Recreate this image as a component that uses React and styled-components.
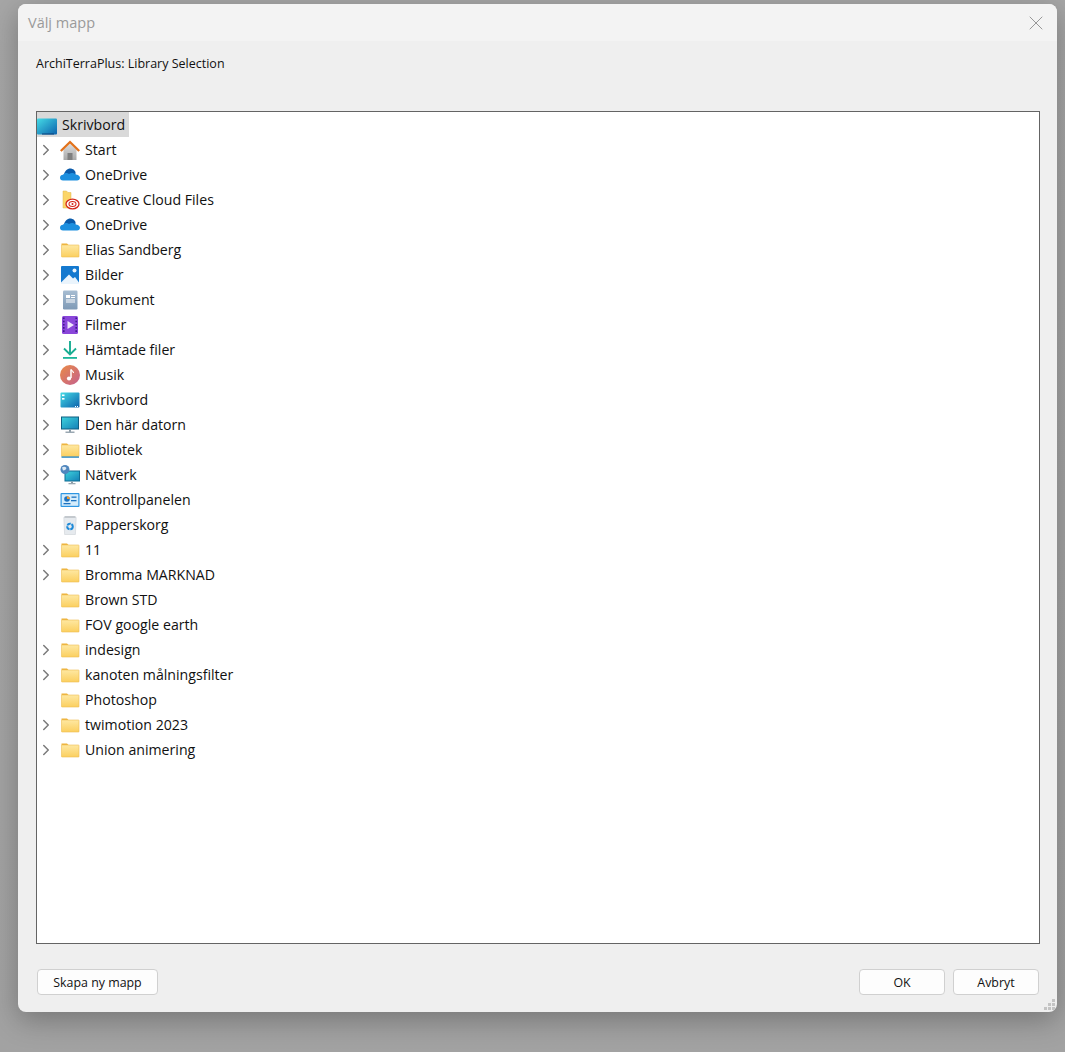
import React from 'react';
import styled, { createGlobalStyle } from 'styled-components';
import { ChevronRight, X } from 'lucide-react';

const GlobalStyle = createGlobalStyle`
  html, body {
    margin: 0;
    padding: 0;
    height: 1052px;
    overflow: hidden;
    background: linear-gradient(180deg, #a6a6a6 0%, #a2a2a2 100%);
    font-family: "Open Sans", "Noto Sans", "Liberation Sans", sans-serif;
  }
`;

const Gradients = () => (
  <svg width="0" height="0" style={{ position: 'absolute' }}>
    <defs>
      <linearGradient id="dk" x1="0" y1="0" x2="1" y2="1">
        <stop offset="0" stopColor="#45dbe6" />
        <stop offset="1" stopColor="#0b62ad" />
      </linearGradient>
      <linearGradient id="fold" x1="0" y1="0" x2="0" y2="1">
        <stop offset="0" stopColor="#fee8a2" />
        <stop offset="1" stopColor="#fbcf5f" />
      </linearGradient>
      <linearGradient id="mu" x1="0" y1="0" x2="1" y2="1">
        <stop offset="0" stopColor="#ea8b45" />
        <stop offset="1" stopColor="#c4608f" />
      </linearGradient>
      <linearGradient id="home" x1="0" y1="0" x2="0" y2="1">
        <stop offset="0" stopColor="#dcdcdc" />
        <stop offset="1" stopColor="#a8a8a8" />
      </linearGradient>
      <linearGradient id="pc" x1="0" y1="0" x2="1" y2="1">
        <stop offset="0" stopColor="#3cd0dc" />
        <stop offset="1" stopColor="#1583b8" />
      </linearGradient>
      <linearGradient id="doc" x1="0" y1="0" x2="0" y2="1">
        <stop offset="0" stopColor="#a7bdd2" />
        <stop offset="1" stopColor="#7f9ab6" />
      </linearGradient>
    </defs>
  </svg>
);

const Folder = ({ bar }) => (
  <svg width="20" height="20" viewBox="0 0 20 20">
    <path d="M1.500 3.500h5.500l2 2h-7.500z" fill="#eeb23a" />
    <rect x="1.500" y="5" width="17.500" height={bar ? 11.500 : 12} rx="0.500" fill="url(#fold)" stroke="#eebd52" strokeWidth="0.600" />
    {bar && <rect x="1.500" y="16.400" width="17.500" height="1.400" fill="#2f8cc4" />}
  </svg>
);

const icons = {
  root: (
    <svg width="20" height="20" viewBox="0 0 20 20">
      <rect x="0" y="3.500" width="20" height="16" rx="1" fill="url(#dk)" />
      <rect x="5" y="18.500" width="12" height="1" fill="#0a3f78" />
    </svg>
  ),
  desk: (
    <svg width="20" height="20" viewBox="0 0 20 20">
      <rect x="0.500" y="2.500" width="19" height="15" rx="1" fill="url(#dk)" />
      <rect x="2" y="4.500" width="2.500" height="1.600" fill="#fff" />
      <rect x="2" y="8" width="2.500" height="1.600" fill="#fff" />
      <rect x="15" y="16" width="1" height="1" fill="#fff" />
      <rect x="17" y="16" width="1" height="1" fill="#fff" />
    </svg>
  ),
  home: (
    <svg width="20" height="20" viewBox="0 0 20 20">
      <path d="M3.500 9.500 10 3.500l6.500 6V20h-13z" fill="url(#home)" />
      <rect x="7.500" y="13" width="5" height="7" fill="#7f7f7f" />
      <path d="M0.800 11 10 2l9.200 9" fill="none" stroke="#e2711a" strokeWidth="2.300" />
    </svg>
  ),
  cloud: (
    <svg width="20" height="20" viewBox="0 0 20 20">
      <path d="M4 10C4.500 5.500 8 3 11 3.500 13 3.800 14.500 5 15.500 7V10.500H4z" fill="#0a5bab" />
      <path d="M3 15.500C1 15.500 0 14 0 12.700 0 11 1.300 9.800 3 9.800 4.500 8 7 7.500 9 9 11 7.500 14 7.500 15.500 9.500 18 9.500 20 10.800 20 12.700 20 14.300 18.700 15.500 17 15.500z" fill="#1c8fdf" />
    </svg>
  ),
  cc: (
    <svg width="20" height="20" viewBox="0 0 20 20">
      <path d="M3 1h3.500l1.500 1.500h3V18H3z" fill="#fbd568" stroke="#dfb650" strokeWidth="0.500" />
      <ellipse cx="12.500" cy="14" rx="6.500" ry="4.800" fill="#fff" stroke="#d4281c" strokeWidth="1.300" />
      <ellipse cx="12.500" cy="14" rx="3.500" ry="2.500" fill="none" stroke="#d4281c" strokeWidth="1.100" />
      <circle cx="12.500" cy="14" r="1" fill="#d4281c" />
    </svg>
  ),
  pic: (
    <svg width="20" height="20" viewBox="0 0 20 20">
      <rect x="1" y="1" width="18" height="18" rx="1" fill="#1479cf" />
      <path d="M1 17.500 9 9.500l4 4 2-1.500 4 5.500V19H1z" fill="#eaf4fc" />
      <circle cx="14.500" cy="5.500" r="2" fill="#eaf4fc" />
    </svg>
  ),
  doc: (
    <svg width="20" height="20" viewBox="0 0 20 20">
      <rect x="3" y="0.500" width="14.500" height="19" rx="1.200" fill="url(#doc)" />
      <rect x="6" y="5" width="4" height="3" fill="#fff" />
      <rect x="11" y="5" width="4" height="1" fill="#fff" />
      <rect x="11" y="7" width="4" height="1" fill="#fff" />
      <rect x="6" y="9.500" width="9" height="1" fill="#fff" />
      <rect x="6" y="11.500" width="9" height="1" fill="#fff" />
    </svg>
  ),
  film: (
    <svg width="20" height="20" viewBox="0 0 20 20">
      <rect x="2" y="1" width="16" height="18" rx="1.500" fill="#8a46da" />
      <path d="M7.500 6v8l6.500-4z" fill="#efe6fb" />
      <path d="M3.800 2.500v15M16.200 2.500v15" stroke="#3b1888" strokeWidth="1.500" strokeDasharray="1.600 1.600" />
    </svg>
  ),
  down: (
    <svg width="20" height="20" viewBox="0 0 20 20">
      <path d="M10 1v13M4 8.500l6 6 6-6" fill="none" stroke="#19ad92" strokeWidth="1.900" />
      <rect x="3" y="17" width="14" height="1.800" fill="#1bb59a" />
    </svg>
  ),
  music: (
    <svg width="20" height="20" viewBox="0 0 20 20">
      <circle cx="10" cy="10" r="10" fill="url(#mu)" />
      <path d="M11 4.500v8.500" stroke="#fff" strokeWidth="1.500" />
      <path d="M11 4.500c.5 1.500 2.500 1.500 2.500 3.500" stroke="#fff" strokeWidth="1.200" fill="none" />
      <circle cx="9" cy="13.500" r="2.100" fill="#fff" />
    </svg>
  ),
  pc: (
    <svg width="20" height="20" viewBox="0 0 20 20">
      <rect x="1" y="1.500" width="18" height="13" fill="#0f5f82" />
      <rect x="2" y="2.500" width="16" height="11" fill="url(#pc)" />
      <rect x="9" y="14.500" width="2" height="2.500" fill="#8a9ba6" />
      <rect x="5.500" y="16.500" width="9" height="1.500" fill="#9aa8b2" />
    </svg>
  ),
  net: (
    <svg width="20" height="20" viewBox="0 0 20 20">
      <rect x="4.500" y="5.500" width="15.500" height="11" fill="#0f6d94" />
      <rect x="5.500" y="6.500" width="13.500" height="9" fill="url(#pc)" />
      <rect x="11" y="16.500" width="2" height="2" fill="#8a9ba6" />
      <rect x="8.500" y="18" width="7" height="1.300" fill="#9aa8b2" />
      <circle cx="5" cy="4.500" r="4.500" fill="#4f86bd" />
      <path d="M2 2.500c1.500-1 3.500-.8 4.500.5l-1.200 2-2.300.5z" fill="#dce9f4" />
    </svg>
  ),
  panel: (
    <svg width="20" height="20" viewBox="0 0 20 20">
      <rect x="0.500" y="3" width="19" height="14" rx="1" fill="#2d96e2" />
      <rect x="1.700" y="4.200" width="16.600" height="11.600" fill="#d4ecfb" />
      <circle cx="7" cy="9" r="2.800" fill="#1d72c0" />
      <path d="M7 9V6.200A2.800 2.800 0 0 1 9.800 9z" fill="#f09a30" />
      <rect x="11.500" y="6.500" width="5" height="1.300" fill="#1d72c0" />
      <rect x="11" y="10" width="5.500" height="1.300" fill="#1d72c0" />
      <rect x="3.500" y="13" width="7" height="1.300" fill="#1d72c0" />
    </svg>
  ),
  bin: (
    <svg width="20" height="20" viewBox="0 0 20 20">
      <path d="M3.800 2.500h12.400l-.8 17h-10.800z" fill="#e6eaee" stroke="#ccd1d6" strokeWidth="0.600" />
      <rect x="4.500" y="1" width="11" height="2" fill="#c4c9ce" />
      <circle cx="10" cy="11.500" r="2.800" fill="none" stroke="#1e8ad8" strokeWidth="2" strokeDasharray="4 0.800" />
    </svg>
  ),
  folder: <Folder />,
  lib: <Folder bar />,
};

const rows = [
  ['Start', 'home', true],
  ['OneDrive', 'cloud', true],
  ['Creative Cloud Files', 'cc', true],
  ['OneDrive', 'cloud', true],
  ['Elias Sandberg', 'folder', true],
  ['Bilder', 'pic', true],
  ['Dokument', 'doc', true],
  ['Filmer', 'film', true],
  ['Hämtade filer', 'down', true],
  ['Musik', 'music', true],
  ['Skrivbord', 'desk', true],
  ['Den här datorn', 'pc', true],
  ['Bibliotek', 'lib', true],
  ['Nätverk', 'net', true],
  ['Kontrollpanelen', 'panel', true],
  ['Papperskorg', 'bin', false],
  ['11', 'folder', true],
  ['Bromma MARKNAD', 'folder', true],
  ['Brown STD', 'folder', false],
  ['FOV google earth', 'folder', false],
  ['indesign', 'folder', true],
  ['kanoten målningsfilter', 'folder', true],
  ['Photoshop', 'folder', false],
  ['twimotion 2023', 'folder', true],
  ['Union animering', 'folder', true],
];

export default function App() {
  return (
    <>
      <GlobalStyle />
      <Gradients />
      <Page>
        <Dialog>
          <TitleBar>
            <Title>Välj mapp</Title>
            <CloseIcon>
              <X size={24} strokeWidth={0.9} />
            </CloseIcon>
          </TitleBar>
          <Body>
            <Caption>ArchiTerraPlus: Library Selection</Caption>
            <Tree>
              <RootRow>
                <IconBox>{icons.root}</IconBox>
                <RootLabel>Skrivbord</RootLabel>
              </RootRow>
              {rows.map(([label, icon, expandable], i) => (
                <Row key={i}>
                  <Arrow>
                    {expandable && <ChevronRight size={18} strokeWidth={2} color="#7a7a7a" />}
                  </Arrow>
                  <IconBox>{icons[icon]}</IconBox>
                  <Label>{label}</Label>
                </Row>
              ))}
            </Tree>
            <Footer>
              <Button $w={121}>Skapa ny mapp</Button>
              <FooterRight>
                <Button $w={86}>OK</Button>
                <Button $w={86}>Avbryt</Button>
              </FooterRight>
            </Footer>
          </Body>
          <Grip>
            <svg width="14" height="14" viewBox="0 0 14 14" fill="#c4c4c4">
              <rect x="9" y="1" width="3" height="3" />
              <rect x="5" y="5" width="3" height="3" />
              <rect x="9" y="5" width="3" height="3" />
              <rect x="1" y="9" width="3" height="3" />
              <rect x="5" y="9" width="3" height="3" />
              <rect x="9" y="9" width="3" height="3" />
            </svg>
          </Grip>
        </Dialog>
      </Page>
    </>
  );
}

const Page = styled.div`
  box-sizing: border-box;
  height: 1052px;
  padding: 4px 8px 40px 18px;
`;

const Dialog = styled.div`
  position: relative;
  height: 1008px;
  background: #efefef;
  border-radius: 8px;
  box-shadow: 0 8px 28px rgba(0, 0, 0, 0.28);
  display: flex;
  flex-direction: column;
  overflow: hidden;
`;

const TitleBar = styled.div`
  flex: 0 0 37px;
  background: #f3f3f3;
  display: flex;
  align-items: center;
  justify-content: space-between;
  padding: 0 9px 0 10px;
`;

const Title = styled.div`
  font-size: 14.5px;
  color: #9a9a9a;
`;

const CloseIcon = styled.div`
  display: flex;
  color: #8c8c8c;
`;

const Body = styled.div`
  flex: 1;
  display: flex;
  flex-direction: column;
  padding: 15px 17px 17px 18px;
  min-height: 0;
`;

const Caption = styled.div`
  font-size: 12.5px;
  line-height: 16px;
  color: #111;
  margin-bottom: 39px;
`;

const Tree = styled.div`
  box-sizing: border-box;
  height: 833px;
  background: #fff;
  border: 1px solid #646464;
  display: flex;
  flex-direction: column;
  align-items: flex-start;
`;

const RootRow = styled.div`
  display: flex;
  align-items: center;
  height: 25px;
  background: #d9d9d9;
  padding-right: 4px;
`;

const Row = styled.div`
  display: flex;
  align-items: center;
  height: 25px;
`;

const Arrow = styled.div`
  width: 18px;
  margin-right: 5px;
  display: flex;
  justify-content: center;
`;

const IconBox = styled.div`
  width: 20px;
  height: 20px;
  display: flex;
`;

const Label = styled.span`
  font-size: 14.15px;
  color: #111;
  margin-left: 5px;
  white-space: nowrap;
`;

const RootLabel = styled(Label)``;

const Footer = styled.div`
  display: flex;
  justify-content: space-between;
  margin-top: 25px;
  padding: 0 1px;
`;

const FooterRight = styled.div`
  display: flex;
  gap: 8px;
`;

const Button = styled.button`
  box-sizing: border-box;
  width: ${p => p.$w}px;
  height: 26px;
  background: #fdfdfd;
  border: 1px solid #d0d0d0;
  border-radius: 4px;
  font-family: inherit;
  font-size: 12.4px;
  color: #111;
  padding: 0;
`;

const Grip = styled.div`
  position: absolute;
  right: 0;
  bottom: 0;
  display: flex;
`;
